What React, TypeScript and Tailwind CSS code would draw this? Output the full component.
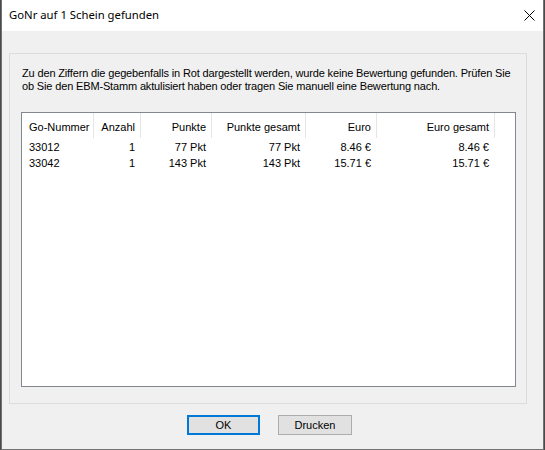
import React from "react";

type Row = { nr: string; anzahl: string; punkte: string; punkteGesamt: string; euro: string; euroGesamt: string };

const rows: Row[] = [
  { nr: "33012", anzahl: "1", punkte: "77 Pkt", punkteGesamt: "77 Pkt", euro: "8.46 €", euroGesamt: "8.46 €" },
  { nr: "33042", anzahl: "1", punkte: "143 Pkt", punkteGesamt: "143 Pkt", euro: "15.71 €", euroGesamt: "15.71 €" },
];

// column widths of the list view, incl. the 1px header divider
const cols = [
  { label: "Go-Nummer", w: "w-[72px]", align: "justify-start pl-[7px]" },
  { label: "Anzahl", w: "w-[47px]", align: "justify-end pr-[5px]" },
  { label: "Punkte", w: "w-[71px]", align: "justify-end pr-[5px]" },
  { label: "Punkte gesamt", w: "w-[94px]", align: "justify-end pr-[5px]" },
  { label: "Euro", w: "w-[71px]", align: "justify-end pr-[5px]" },
  { label: "Euro gesamt", w: "w-[118px]", align: "justify-end pr-[5px]" },
];

export default function App() {
  return (
    <div className="w-[545px] h-[450px] bg-[#4a4a4a] px-px overflow-hidden font-['Liberation_Sans',Arial,sans-serif] text-[11px] text-black">
      <div className="h-full flex flex-col bg-[#f0f0f0] border-x border-b border-[#727272]">
        {/* Title bar */}
        <div className="h-[31px] shrink-0 bg-white flex items-center justify-between pl-[7px] pr-[8px]">
          <span className="font-['Noto_Sans',sans-serif] text-[11.3px] leading-none pb-[2px]">GoNr auf 1 Schein gefunden</span>
          <svg width="11" height="11" viewBox="0 0 11 11" className="mb-[1px]">
            <path d="M0.5 0.5 L10.5 10.5 M10.5 0.5 L0.5 10.5" stroke="#000" strokeWidth="1" fill="none" />
          </svg>
        </div>

        {/* Client area */}
        <div className="flex-1 flex flex-col">
          <div className="mt-[22px] ml-[7px] w-[518px] h-[351px] border border-[#dcdcdc] flex flex-col">
            <p className="mt-[13px] ml-[12px] leading-[13px] tracking-[-0.15px]">
              Zu den Ziffern die gegebenfalls in Rot dargestellt werden, wurde keine Bewertung gefunden. Prüfen Sie
              <br />
              ob Sie den EBM-Stamm aktulisiert haben oder tragen Sie manuell eine Bewertung nach.
            </p>

            {/* List view */}
            <div className="mt-[19px] ml-[11px] w-[495px] h-[275px] border border-[#828790] bg-white">
              <div className="flex h-[25px]">
                {cols.map((c) => (
                  <div key={c.label} className={`${c.w} h-full flex items-center pt-[4px] border-r border-[#e5e5e5] ${c.align}`}>
                    {c.label}
                  </div>
                ))}
              </div>
              <div className="mt-[1px]">
                {rows.map((r) => (
                  <div key={r.nr} className="flex h-[16px] items-center">
                    <div className="w-[72px] pl-[7px]">{r.nr}</div>
                    <div className="w-[47px] text-right pr-[6px]">{r.anzahl}</div>
                    <div className="w-[71px] text-right pr-[6px]">{r.punkte}</div>
                    <div className="w-[94px] text-right pr-[6px]">{r.punkteGesamt}</div>
                    <div className="w-[71px] text-right pr-[6px]">{r.euro}</div>
                    <div className="w-[118px] text-right pr-[6px]">{r.euroGesamt}</div>
                  </div>
                ))}
              </div>
            </div>
          </div>

          {/* Buttons */}
          <div className="mt-[11px] flex justify-center gap-[18px] pr-[6px]">
            <button className="w-[73px] h-[20px] border-2 border-[#0078d7] bg-[#e1e1e1] leading-none">OK</button>
            <button className="w-[74px] h-[20px] border border-[#adadad] bg-[#e1e1e1] leading-none">Drucken</button>
          </div>
        </div>
      </div>
    </div>
  );
}
